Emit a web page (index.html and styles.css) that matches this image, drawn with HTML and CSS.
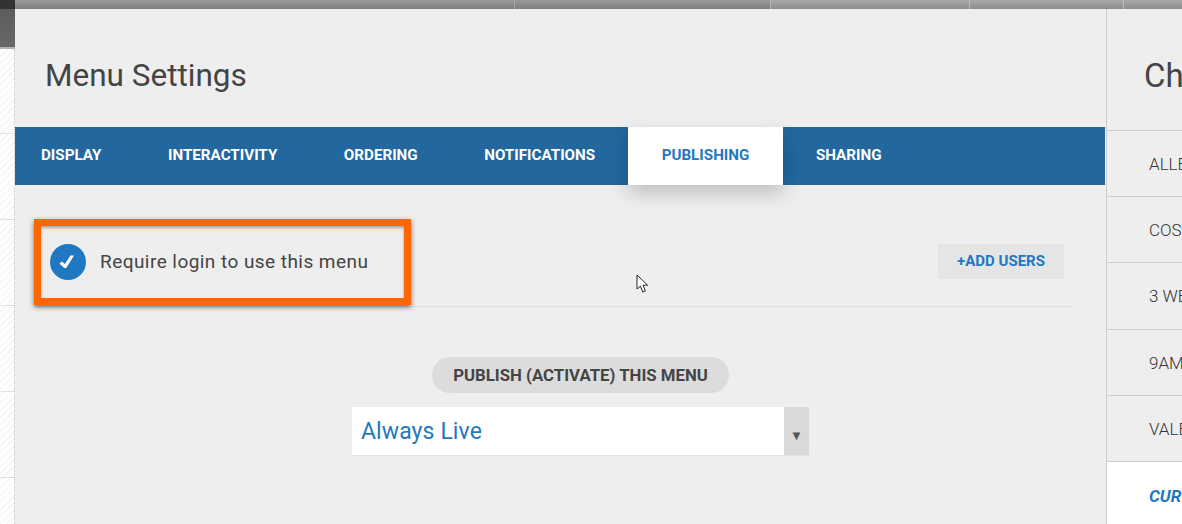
FILE: index.html
```html
<!DOCTYPE html>
<html lang="en">
<head>
    <meta charset="UTF-8">
    <meta name="viewport" content="width=device-width, initial-scale=1.0">
    <title>Menu Settings</title>
    <link rel="stylesheet" href="styles.css">
</head>
<body>
    <div class="top-bar">
        <div class="top-cell wide"></div>
        <div class="top-cell mid"></div>
        <div class="top-cell light small"></div>
        <div class="top-cell light smaller"></div>
        <div class="top-cell light"></div>
    </div>
    <div class="page">
        <aside class="left-strip">
            <div class="left-row"></div>
            <div class="left-row"></div>
            <div class="left-row"></div>
            <div class="left-row"></div>
            <div class="left-row"></div>
        </aside>
        <main class="settings">
            <h1>Menu Settings</h1>
            <nav class="tabs">
                <a class="tab">Display</a>
                <a class="tab">Interactivity</a>
                <a class="tab">Ordering</a>
                <a class="tab">Notifications</a>
                <a class="tab active">Publishing</a>
                <a class="tab">Sharing</a>
            </nav>
            <div class="login-row">
                <div class="login-check">
                    <span class="check-circle">
                        <svg width="18" height="18" viewBox="0 0 18 18"><path d="M0.4 10.4 L3 8.6 L6 11 L11.4 2.4 L15 2.4 L7.2 15 L5.2 15 Z" fill="#fff"/></svg>
                    </span>
                    <span class="login-label">Require login to use this menu</span>
                </div>
                <button class="add-users">+Add Users</button>
                <div class="highlight"></div>
                <svg class="cursor" width="14" height="20" viewBox="0 0 14 20"><path d="M1 1 L1 15 L4.4 12 L6.8 18 L9.4 17 L7 11.2 L11.6 11.2 Z" fill="#fff" stroke="#222" stroke-width="1"/></svg>
            </div>
            <section class="publish">
                <div class="publish-pill">Publish (Activate) This Menu</div>
                <div class="publish-select">
                    <span class="select-value">Always Live</span>
                    <span class="select-arrow">&#9660;</span>
                </div>
            </section>
        </main>
        <aside class="right-panel">
            <h2>Ch</h2>
            <div class="right-row">ALLE</div>
            <div class="right-row">COST</div>
            <div class="right-row">3 WE</div>
            <div class="right-row">9AM</div>
            <div class="right-row">VALE</div>
            <div class="right-row current">CUR</div>
        </aside>
    </div>
</body>
</html>
```
FILE: styles.css
```css
body {
    font-family: Roboto, Arial, sans-serif;
    margin: 0;
    width: 1182px;
    height: 524px;
    overflow: hidden;
    background-color: #eeeeee;
    color: #444444;
}
.top-bar {
    display: flex;
    height: 9px;
}
.top-cell {
    flex: 1;
    background: linear-gradient(#9a9a9a, #7d7d7d);
}
.top-cell.wide {
    flex: 0 0 515px;
    border-right: 1px solid #a8a8a8;
    box-sizing: border-box;
}
.top-cell.mid {
    flex: 0 0 256px;
    border-right: 1px solid #b5b5b5;
    box-sizing: border-box;
}
.top-cell.light {
    background: linear-gradient(#a8a8a8, #8c8c8c);
}
.top-cell.small {
    flex: 0 0 199px;
    border-right: 1px solid #bcbcbc;
    box-sizing: border-box;
}
.top-cell.smaller {
    flex: 0 0 154px;
    border-right: 1px solid #bcbcbc;
    box-sizing: border-box;
}
.page {
    display: flex;
    height: 515px;
}
.left-strip {
    position: relative;
    width: 14px;
    padding-top: 39px;
    border-right: 1px dotted #c4c4c4;
    background: repeating-linear-gradient(135deg, #ffffff, #ffffff 3px, #f7f7f7 3px, #f7f7f7 5px);
}
.left-strip::before {
    content: "";
    position: absolute;
    top: -9px;
    left: 0;
    width: 15px;
    height: 47px;
    background: linear-gradient(#333333 9px, #5c5c5c 9px, #686868);
    border-bottom: 2px solid #b5b5b5;
}
.left-row {
    height: 85px;
    border-bottom: 1px solid #e2e2e2;
}
.settings {
    width: 1091px;
    flex-shrink: 0;
}
.settings h1 {
    margin: 0;
    height: 118px;
    padding-left: 30px;
    box-sizing: border-box;
    font-size: 31.5px;
    font-weight: 400;
    line-height: 134px;
}
.tabs {
    display: flex;
    height: 58px;
    margin-right: 1px;
    padding-left: 26px;
    background-color: #22679e;
}
.tab {
    padding: 0 33.25px;
    color: white;
    font-size: 15.2px;
    font-weight: 700;
    line-height: 56px;
    text-transform: uppercase;
}
.tab:first-child {
    padding-left: 0;
}
.tab.active {
    background-color: white;
    color: #1f78c1;
    box-shadow: 0 8px 18px rgba(0, 0, 0, 0.2);
}
.login-row {
    position: relative;
    display: flex;
    justify-content: space-between;
    align-items: flex-start;
    height: 36px;
    margin: 0 34px 0 19px;
    padding: 59px 8px 26px 16px;
    border-bottom: 1px solid #dddddd;
}
.login-check {
    display: flex;
    align-items: center;
    gap: 14px;
}
.check-circle {
    display: flex;
    align-items: center;
    justify-content: center;
    width: 36px;
    height: 36px;
    border-radius: 50%;
    background-color: #1f78c1;
}
.login-label {
    position: relative;
    top: -1px;
    font-size: 19px;
    letter-spacing: 0.45px;
}
.add-users {
    width: 126px;
    height: 35px;
    padding: 0 0 1px;
    border: none;
    background-color: #e5e5e5;
    color: #1f78c1;
    font-family: inherit;
    font-size: 15px;
    font-weight: 700;
    text-transform: uppercase;
}
.highlight {
    position: absolute;
    top: 34px;
    left: 0;
    width: 363px;
    height: 72px;
    border: 7px solid #ff6600;
    box-shadow: 0 2px 5px rgba(0, 0, 0, 0.55), inset 0 2px 3px rgba(0, 0, 0, 0.3);
}
.cursor {
    position: absolute;
    top: 89px;
    left: 602px;
}
.publish {
    display: flex;
    flex-direction: column;
    align-items: center;
    padding: 50px 0 0 40px;
}
.publish-pill {
    height: 36px;
    padding: 0 21.5px;
    border-radius: 18px;
    background-color: #dcdcdc;
    font-size: 16.8px;
    font-weight: 700;
    line-height: 37px;
    text-transform: uppercase;
}
.publish-select {
    display: flex;
    justify-content: space-between;
    width: 457px;
    height: 48px;
    margin-top: 14px;
    background-color: white;
    box-shadow: 0 1px 1px #e2e2e2;
}
.select-value {
    padding-left: 9px;
    color: #1f78c1;
    font-size: 23px;
    letter-spacing: 0.1px;
    line-height: 49px;
}
.select-arrow {
    width: 25px;
    background-color: #d9d9d9;
    color: #555555;
    font-size: 13px;
    line-height: 58px;
    text-align: center;
}
.right-panel {
    flex: 1;
    border-left: 1px solid #cccccc;
    overflow: hidden;
    white-space: nowrap;
}
.right-panel h2 {
    margin: 0;
    height: 122px;
    padding-left: 37px;
    box-sizing: border-box;
    border-bottom: 1px solid #cccccc;
    font-size: 33px;
    font-weight: 400;
    line-height: 133px;
}
.right-row {
    height: 65.2px;
    padding-left: 42px;
    border-bottom: 1px solid #cccccc;
    color: #333333;
    font-size: 17px;
    font-weight: 300;
    line-height: 66px;
}
.right-row.current {
    height: 62px;
    border-bottom: none;
    background-color: white;
    color: #1f78c1;
    font-weight: 700;
    font-style: italic;
    line-height: 68px;
}
```
